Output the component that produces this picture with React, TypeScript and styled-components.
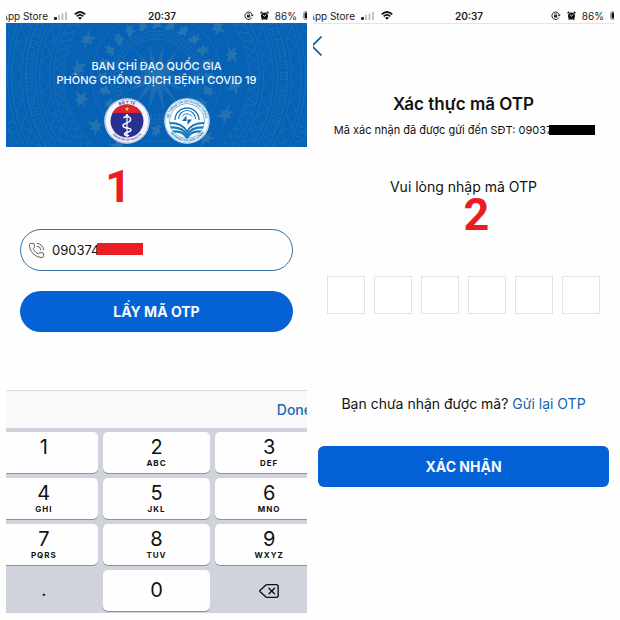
import React from "react";
import styled, { createGlobalStyle } from "styled-components";
import { Delete, PhoneCall } from "lucide-react";

const GlobalStyle = createGlobalStyle`
  *, *::before, *::after { box-sizing: border-box; }
  body {
    margin: 0;
    background: #fefefe;
    color: #111;
    font-family: Inter, "Noto Sans", sans-serif;
  }
  button, input { font: inherit; color: inherit; }
`;

const Page = styled.main`
  display: grid;
  grid-template-columns: repeat(2, minmax(0, 1fr));
  gap: 6px;
  padding: 8px 6px;
`;

const Screen = styled.section`
  position: relative;
  display: flex;
  flex-direction: column;
  overflow: hidden;
`;

/* ---------- status bar ---------- */

const StatusRow = styled.header<{ $shadow?: boolean }>`
  display: grid;
  grid-template-columns: 1fr auto 1fr;
  align-items: center;
  height: 15px;
  margin: 0 -16px;
  padding: 0 0 0 11px;
  font-size: 10px;
  line-height: 14px;
  color: #222;
  box-shadow: ${(p) => (p.$shadow ? "0 1px 1px #e4e4e6" : "none")};
`;

const StatusGroup = styled.div<{ $end?: boolean }>`
  display: flex;
  align-items: center;
  justify-content: ${(p) => (p.$end ? "flex-end" : "flex-start")};
  gap: 6px;
`;

const Clock = styled.time`
  font-size: 10px;
  font-weight: 600;
`;

const Signal = () => (
  <svg width="14" height="8" viewBox="0 0 14 8" aria-hidden="true">
    <rect x="0" y="5" width="3" height="3" rx="1" fill="#222" />
    <rect x="4" y="3" width="2" height="5" fill="#c4c4c4" />
    <rect x="7.500" y="1.500" width="2" height="6.500" fill="#c4c4c4" />
    <rect x="11" y="0" width="2" height="8" fill="#c4c4c4" />
  </svg>
);

const Wifi = () => (
  <svg width="12" height="9" viewBox="0 0 12 9" fill="none" stroke="#111" aria-hidden="true">
    <path d="M0.800 3.400Q6-1.400 11.200 3.400" strokeWidth="1.900" />
    <path d="M2.700 5.400Q6 2.500 9.300 5.400" strokeWidth="1.600" />
    <path d="M6 8.800L4 6.800Q6 5.300 8 6.800Z" fill="#111" stroke="none" />
  </svg>
);

const RotationLock = () => (
  <svg width="10" height="9" viewBox="0 0 10 9" fill="none" stroke="#222" aria-hidden="true">
    <path d="M7.800 6.600A3.700 3.700 0 1 1 8.200 3.900" />
    <path d="M6.700 3.800H9.700L8.200 5.600Z" fill="#222" stroke="none" />
    <rect x="3" y="4.100" width="3.200" height="2.400" fill="#222" stroke="none" />
    <path d="M3.700 4.300V3.300a0.900 0.900 0 0 1 1.800 0V4.300" strokeWidth="0.700" />
  </svg>
);

const Alarm = () => (
  <svg width="9" height="9" viewBox="0 0 9 9" fill="none" aria-hidden="true">
    <circle cx="4.500" cy="5" r="3.500" fill="#111" />
    <path d="M0.500 2.200L2.200 0.700M8.500 2.200L6.800 0.700M1.800 8.700L2.600 7.800M7.200 8.700L6.400 7.800" stroke="#111" strokeWidth="1.300" />
    <path d="M3 3.800L4.500 5.200L6.200 3.600" stroke="#fff" strokeWidth="0.900" />
  </svg>
);

const Battery = () => (
  <svg width="20" height="9" viewBox="0 0 20 9" aria-hidden="true">
    <rect x="0.500" y="0.500" width="17" height="8" rx="2" fill="none" stroke="#999" />
    <rect x="1.500" y="1.500" width="13" height="6" rx="1" fill="#111" />
    <rect x="18.500" y="3" width="1" height="3" fill="#999" />
  </svg>
);

const StatusBar = ({ shadow }: { shadow?: boolean }) => (
  <StatusRow $shadow={shadow}>
    <StatusGroup>
      <span>App Store</span>
      <Signal />
      <Wifi />
    </StatusGroup>
    <Clock>20:37</Clock>
    <StatusGroup $end>
      <RotationLock />
      <Alarm />
      <span>86%</span>
      <Battery />
    </StatusGroup>
  </StatusRow>
);

/* ---------- banner ---------- */

const Banner = styled.div`
  position: relative;
  display: flex;
  flex-direction: column;
  align-items: center;
  gap: 11px;
  padding: 36px 8px 3px;
  overflow: hidden;
  background: #0762b6;
  color: #f4faff;
`;

const DrumPattern = styled.svg`
  position: absolute;
  inset: 0;
  width: 100%;
  height: 100%;
`;

const BannerTitle = styled.h1`
  position: relative;
  margin: 0;
  font-size: 11px;
  font-weight: 500;
  line-height: 14px;
  text-align: center;
`;

const Logos = styled.div`
  position: relative;
  display: flex;
  gap: 14px;
`;

const around = (n: number) => Array.from({ length: n }, (_, i) => (i * 360) / n);

const zigzag = (r1: number, r2: number, n: number) =>
  Array.from({ length: n * 2 }, (_, i) => {
    const a = (i * Math.PI) / n;
    const r = i % 2 ? r1 : r2;
    return `${i ? "L" : "M"}${(Math.cos(a) * r).toFixed(1)} ${(Math.sin(a) * r).toFixed(1)}`;
  }).join("") + "Z";

const Drum = () => (
  <DrumPattern viewBox="-151 -54 302 124" preserveAspectRatio="xMidYMid slice" aria-hidden="true">
    <g fill="none" stroke="#3c86b8" strokeWidth="0.700" opacity="0.450">
      {[38, 43, 46, 65, 93, 103, 107, 117, 121, 131, 135, 145, 149, 160].map((r) => (
        <circle key={r} r={r} />
      ))}
      <circle r="40.500" strokeWidth="3" strokeDasharray="1 3" />
      <path d={zigzag(94, 102, 70)} />
      <path d={zigzag(108, 116, 44)} />
      <path d={zigzag(136, 144, 54)} />
      {around(70).map((a) => (
        <path key={a} transform={`rotate(${a})`} d="M122-4.500h8v7h-6v-4h3v2" />
      ))}
      {around(90).map((a) => (
        <path key={a} transform={`rotate(${a})`} d="M150-3h7v5h-4" />
      ))}
    </g>
    <g fill="#6b9aa5" opacity="0.300">
      <path d={zigzag(12, 35, 14)} opacity="0.700" />
      {around(24).map((a) => (
        <path key={a} transform={`rotate(${a})`} d="M49-5l3 2 5-1-1 3 5 1-4 2 1 3-4-2-4 2v-4l-2-2z" />
      ))}
      {around(16).map((a) => (
        <path key={a} transform={`rotate(${a + 6})`} d="M77-11l2 7 6-3-3 5 3 3-4 1 1 8-4-6-7 2 4-5-3-3 5-1z" />
      ))}
    </g>
    <circle r="8" fill="#2d7cbb" opacity="0.400" />
  </DrumPattern>
);

const HealthLogo = () => (
  <svg width="46" height="46" viewBox="0 0 46 46" role="img" aria-label="Bộ Y tế">
    <defs>
      <path id="healthTop" d="M5.500 23a17.500 17.500 0 0 1 35 0" />
      <path id="healthBottom" d="M3 23a20 20 0 0 0 40 0" />
      <clipPath id="healthDisc">
        <circle cx="23" cy="23" r="16.500" />
      </clipPath>
    </defs>
    <circle cx="23" cy="23" r="22.700" fill="#f5f6fd" />
    <circle cx="23" cy="23" r="21.900" fill="none" stroke="#8b91cd" strokeWidth="0.600" />
    <g clipPath="url(#healthDisc)">
      <rect x="6" y="6" width="34" height="34" fill="#2a2f91" />
      <rect x="6" y="6" width="34" height="9" fill="#e3222d" />
    </g>
    <path d="M23 8.800l0.600 1.500h1.600l-1.300 1 .5 1.600L23 12l-1.400.9.5-1.600-1.300-1h1.600z" fill="#ffe437" />
    <path d="M23 17V39" stroke="#fff" strokeWidth="1.200" />
    <circle cx="23" cy="17.300" r="1.200" fill="#fff" />
    <path d="M20 19.500C25 16.500 28.500 21 25.500 23.500C22 26 18.500 25.500 19 28C20 31 27 29 27 32C27 34.500 21 33.500 20.500 36C20.800 37.700 23 37.500 24.500 37.500" fill="none" stroke="#fff" strokeWidth="1.500" strokeLinecap="round" />
    <text fontSize="4" fontWeight="700" fill="#373a7c" textAnchor="middle">
      <textPath href="#healthTop" startOffset="50%">BỘ Y TẾ</textPath>
    </text>
    <text fontSize="3" fontWeight="700" fill="#555ba8" textAnchor="middle">
      <textPath href="#healthBottom" startOffset="50%">MINISTRY OF HEALTH</textPath>
    </text>
  </svg>
);

const InfoLogo = () => (
  <svg width="46" height="46" viewBox="0 0 46 46" role="img" aria-label="Bộ Thông tin và Truyền thông">
    <defs>
      <path id="infoTop" d="M4.500 23a18.500 18.500 0 0 1 37 0" />
      <path id="infoBottom" d="M2.500 23a20.500 20.500 0 0 0 41 0" />
      <clipPath id="infoDisc">
        <circle cx="23" cy="23" r="17.500" />
      </clipPath>
    </defs>
    <circle cx="23" cy="23" r="22.700" fill="#eef8fd" />
    <circle cx="23" cy="23" r="22" fill="none" stroke="#5aa5d4" strokeWidth="0.500" />
    <g clipPath="url(#infoDisc)" fill="none" stroke="#1b79b8">
      <circle cx="23" cy="23" r="17.500" fill="#fff" strokeWidth="1" />
      <path d="M11 22a12 12 0 0 1 24 0" strokeWidth="1.400" />
      <path d="M14.500 21a8.500 8.500 0 0 1 17 0" strokeWidth="1.200" />
      <path d="M18 18.500a6 6 0 0 1 10 0" strokeWidth="1" />
      <path d="M5 25Q18 24.500 23 33.500Q28 24.500 41 25" strokeWidth="2" />
      <path d="M5 29.500Q18 28 23 37Q28 28 41 29.500" strokeWidth="2.200" />
      <path d="M7 34Q18 31.500 23 40Q28 31.500 39 34" strokeWidth="2.200" />
    </g>
    <path d="M22.500 17.500L18 23H22.500ZM23.500 21.500H28L23.500 27Z" fill="#1268ad" />
    <text fontSize="3" fontWeight="700" fill="#2b7fb8" textAnchor="middle">
      <textPath href="#infoTop" startOffset="50%">BỘ THÔNG TIN VÀ TRUYỀN THÔNG</textPath>
    </text>
    <text fontSize="3" fontWeight="700" fill="#2b7fb8" textAnchor="middle">
      <textPath href="#infoBottom" startOffset="50%">INFORMATION AND COMM</textPath>
    </text>
  </svg>
);

/* ---------- shared parts ---------- */

const StepNumber = styled.span<{ $top: number; $left: number }>`
  position: absolute;
  top: ${(p) => p.$top}px;
  left: ${(p) => p.$left}%;
  color: #ea1c24;
  font-family: Roboto, "Liberation Sans", sans-serif;
  font-size: 45px;
  font-weight: 700;
  line-height: 46px;
`;

const PrimaryButton = styled.button<{ $pill?: boolean }>`
  height: 41px;
  border: 0;
  border-radius: ${(p) => (p.$pill ? 21 : 6)}px;
  background: #0562d6;
  color: #f5faff;
  font-size: 14px;
  font-weight: 700;
  cursor: pointer;
`;

/* ---------- phone entry ---------- */

const PhoneForm = styled.form`
  display: flex;
  flex-direction: column;
  gap: 20px;
  padding: 82px 14px 58px;
`;

const PhoneField = styled.label`
  position: relative;
  display: flex;
  align-items: center;
  gap: 7px;
  height: 42px;
  padding: 0 7px;
  border: 1px solid #3472a6;
  border-radius: 21px;
  svg { flex: none; color: #555; }
`;

const PhoneInput = styled.input`
  flex: 1;
  min-width: 0;
  padding: 0;
  border: 0;
  outline: 0;
  background: none;
  font-size: 13px;
  line-height: 20px;
`;

const FieldRedaction = styled.span`
  position: absolute;
  top: 13px;
  left: 76px;
  width: 46px;
  height: 12px;
  background: #ec1c24;
`;

/* ---------- keyboard ---------- */

const Keyboard = styled.div`
  margin: 0 -16px;
  background: #d1d3dc;
`;

const KeyboardBar = styled.div`
  display: flex;
  justify-content: flex-end;
  height: 38px;
  padding-right: 11px;
  border-top: 1px solid #dcdcde;
  background: #f9f9fa;
`;

const DoneButton = styled.button`
  padding: 0;
  border: 0;
  background: none;
  color: #1768b3;
  font-size: 14px;
  font-weight: 500;
  cursor: pointer;
`;

const Keys = styled.div`
  display: grid;
  grid-template-columns: repeat(3, 1fr);
  gap: 5px;
  padding: 4px 0 2px;
`;

const Key = styled.button<{ $plain?: boolean }>`
  display: flex;
  flex-direction: column;
  align-items: center;
  justify-content: ${(p) => (p.$plain ? "center" : "flex-start")};
  height: 41px;
  padding: ${(p) => (p.$plain ? 0 : "4px 0 0")};
  border: 0;
  border-radius: 5px;
  background: ${(p) => (p.$plain ? "transparent" : "#fefefe")};
  box-shadow: ${(p) => (p.$plain ? "none" : "0 1px 0 #909299")};
  cursor: pointer;
`;

const Digit = styled.span<{ $alone?: boolean }>`
  font-size: 20px;
  line-height: ${(p) => (p.$alone ? 32 : 22)}px;
`;

const Point = styled.span`
  font-size: 14px;
  font-weight: 700;
  line-height: 20px;
`;

const Letters = styled.span`
  font-size: 8px;
  font-weight: 700;
  line-height: 10px;
  letter-spacing: 1px;
`;

const keys: [string, string][] = [
  ["1", ""], ["2", "ABC"], ["3", "DEF"],
  ["4", "GHI"], ["5", "JKL"], ["6", "MNO"],
  ["7", "PQRS"], ["8", "TUV"], ["9", "WXYZ"],
];

/* ---------- OTP entry ---------- */

const BackButton = styled.button`
  align-self: flex-start;
  display: flex;
  height: 20px;
  margin-top: 13px;
  padding: 0;
  border: 0;
  background: none;
  cursor: pointer;
`;

const OtpForm = styled.form`
  display: flex;
  flex-direction: column;
  padding: 37px 5px 0;
  text-align: center;
`;

const OtpTitle = styled.h2`
  margin: 0;
  font-size: 17px;
  font-weight: 600;
  line-height: 22px;
`;

const SentTo = styled.p`
  display: flex;
  align-items: center;
  justify-content: center;
  margin: 6px 0 0;
  font-size: 11px;
  line-height: 18px;
  white-space: nowrap;
`;

const SentRedaction = styled.span`
  width: 46px;
  height: 10px;
  margin: 0 -2px 0 -3px;
  background: #000;
`;

const Prompt = styled.p`
  margin: 38px 0 0;
  font-size: 14px;
  line-height: 20px;
`;

const OtpBoxes = styled.fieldset`
  display: flex;
  justify-content: space-between;
  margin: 79px 0 0;
  padding: 0 9px;
  border: 0;
`;

const OtpBox = styled.input`
  width: 38px;
  height: 38px;
  padding: 0;
  border: 1px solid #e2e2e2;
  background: #fff;
  font-size: 16px;
  text-align: center;
`;

const Resend = styled.p`
  margin: 80px 0 32px;
  font-size: 14px;
  line-height: 20px;
  white-space: nowrap;
`;

const ResendLink = styled.a`
  color: #1762b0;
  text-decoration: none;
`;

const stay = (e: React.FormEvent) => e.preventDefault();

export default function App() {
  return (
    <>
      <GlobalStyle />
      <Page>
        <Screen>
          <StatusBar />
          <Banner>
            <Drum />
            <BannerTitle>
              BAN CHỈ ĐẠO QUỐC GIA
              <br />
              PHÒNG CHỐNG DỊCH BỆNH COVID 19
            </BannerTitle>
            <Logos>
              <HealthLogo />
              <InfoLogo />
            </Logos>
          </Banner>
          <PhoneForm onSubmit={stay}>
            <PhoneField>
              <PhoneCall size={17} strokeWidth={1.3} aria-hidden="true" />
              <PhoneInput type="tel" aria-label="Số điện thoại" defaultValue="090374" />
              <FieldRedaction />
            </PhoneField>
            <PrimaryButton $pill>LẤY MÃ OTP</PrimaryButton>
          </PhoneForm>
          <Keyboard>
            <KeyboardBar>
              <DoneButton type="button">Done</DoneButton>
            </KeyboardBar>
            <Keys>
              {keys.map(([digit, letters]) => (
                <Key key={digit} type="button">
                  <Digit>{digit}</Digit>
                  <Letters>{letters}</Letters>
                </Key>
              ))}
              <Key type="button" $plain>
                <Point>.</Point>
              </Key>
              <Key type="button">
                <Digit $alone>0</Digit>
              </Key>
              <Key type="button" $plain aria-label="Xóa">
                <Delete size={22} strokeWidth={1.5} />
              </Key>
            </Keys>
          </Keyboard>
          <StepNumber $top={156} $left={33}>1</StepNumber>
        </Screen>

        <Screen>
          <StatusBar shadow />
          <BackButton type="button" aria-label="Quay lại">
            <svg width="9" height="20" viewBox="0 0 9 20" fill="none" stroke="#17609f" strokeWidth="1.600">
              <path d="M8.500 0.500L-1 10L8.500 19.500" />
            </svg>
          </BackButton>
          <OtpForm onSubmit={stay}>
            <OtpTitle>Xác thực mã OTP</OtpTitle>
            <SentTo>
              Mã xác nhận đã được gửi đến SĐT: 09037
              <SentRedaction />
            </SentTo>
            <Prompt>Vui lòng nhập mã OTP</Prompt>
            <OtpBoxes aria-label="Mã OTP">
              {[1, 2, 3, 4, 5, 6].map((n) => (
                <OtpBox key={n} inputMode="numeric" maxLength={1} aria-label={`Số ${n}`} />
              ))}
            </OtpBoxes>
            <Resend>
              Bạn chưa nhận được mã? <ResendLink href="#resend">Gửi lại OTP</ResendLink>
            </Resend>
            <PrimaryButton>XÁC NHẬN</PrimaryButton>
          </OtpForm>
          <StepNumber $top={184} $left={50}>2</StepNumber>
        </Screen>
      </Page>
    </>
  );
}
